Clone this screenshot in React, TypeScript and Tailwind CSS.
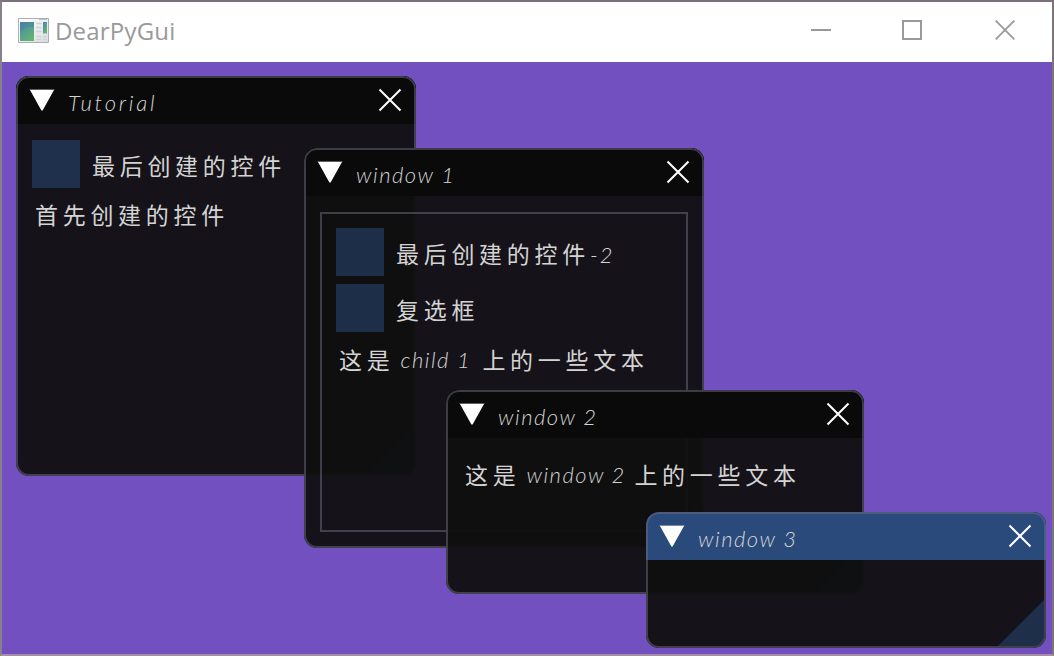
import type { ReactNode } from "react";

function Collapse() {
  return (
    <svg className="block h-6 w-[26px] shrink-0" viewBox="0 0 26 24" aria-hidden="true">
      <path d="M1 2H25L13.6 22.5H12.4Z" fill="#fff" />
      <path d="M0.5 1H25.5V2H0.5Z" fill="#fff" fillOpacity=".35" />
    </svg>
  );
}

function Close() {
  return (
    <svg className="block h-6 w-6 shrink-0" viewBox="0 0 24 24" aria-hidden="true">
      <path d="M1.5 1.5L22.5 22.5M22.5 1.5L1.5 22.5" stroke="#fff" strokeWidth="2" />
    </svg>
  );
}

/* Latin run in the slanted handwriting style */
function L({ children, className = "" }: { children: ReactNode; className?: string }) {
  return (
    <span className={`inline-block whitespace-pre font-['Lato','Liberation_Sans',sans-serif] text-[22px] font-light italic ${className}`}>
      {children}
    </span>
  );
}

/* Chinese run */
function C({ children }: { children: ReactNode }) {
  return (
    <span className="relative -top-px inline-block whitespace-pre font-['Noto_Sans_CJK_SC',sans-serif] text-[23px] leading-6 font-normal tracking-[4.7px]">
      {children}
    </span>
  );
}

function Win({
  title,
  titleClass,
  place,
  active = false,
  children,
}: {
  title: string;
  titleClass: string;
  place: string;
  active?: boolean;
  children?: ReactNode;
}) {
  return (
    <section className={`absolute flex flex-col overflow-hidden rounded-[13px] bg-[rgba(15,15,15,0.94)] text-[#d4d4d4] ${place}`}>
      <header className={`flex h-12 shrink-0 items-start pr-[14px] pl-[13px] pt-3 ${active ? "bg-[#294a7a]" : "bg-[#0a0a0a]"}`}>
        <Collapse />
        <h2 className="ml-[13px] flex-1 leading-[30px]">
          <L className={`leading-[30px] ${titleClass}`}>{title}</L>
        </h2>
        <Close />
      </header>
      <div className="flex flex-1 flex-col p-4">{children}</div>
      <svg className="absolute right-[2px] bottom-[2px] h-[46px] w-[46px]" viewBox="0 0 46 46" aria-hidden="true">
        <path d="M0 46L46 0V36A10 10 0 0 1 36 46Z" fill="rgba(66,150,250,0.22)" />
      </svg>
      <div className="pointer-events-none absolute inset-0 rounded-[13px] border-2 border-[rgba(110,110,128,0.5)]" />
    </section>
  );
}

function Check({ children }: { children: ReactNode }) {
  return (
    <div className="flex h-12 items-center gap-3">
      <span className="h-12 w-12 shrink-0 bg-[rgba(41,74,122,0.54)]" />
      <span className="flex items-center whitespace-nowrap pt-1">{children}</span>
    </div>
  );
}

export default function App() {
  return (
    <div className="flex h-[656px] w-[1054px] flex-col overflow-hidden border-2 border-t-[#7b6f7e] border-r-[#7b7479] border-b-[#a78fa6] border-l-[#88818a] bg-[#7350bf]">
      <div className="flex h-[60px] shrink-0 items-center bg-white pl-4">
        <svg className="-mt-[2px] h-[26px] w-8" viewBox="0 0 32 26" aria-hidden="true">
          <defs>
            <linearGradient id="pane" x1="0" y1="0" x2=".6" y2="1">
              <stop offset="0" stopColor="#4a84ae" />
              <stop offset="1" stopColor="#62b474" />
            </linearGradient>
            <linearGradient id="frame" x1="0" y1="0" x2="1" y2="1">
              <stop offset="0" stopColor="#fff" />
              <stop offset="1" stopColor="#dcdde0" />
            </linearGradient>
          </defs>
          <path d="M.5 .5H30.5V24.5H.5Z" fill="url(#frame)" stroke="#a9aeb5" />
          <path d="M21 1.5H29" stroke="#b9c0ca" />
          <path d="M2 4H16V23H2Z" fill="url(#pane)" />
          <path d="M2 14Q8 8 16 9V4H2Z" fill="#3f739f" fillOpacity=".3" />
          <path d="M18 5.5H23.5M18 9.5H23.5M18 13.5H23.5M18 18.5H23.5M18 21.5H23.5M25 18.5H29M25 21.5H29" stroke="#d0d2d6" strokeWidth="1.5" />
          <path d="M25 4H29V15.5H25Z" fill="url(#pane)" />
        </svg>
        <h1 className="-mt-[2px] ml-[5px] flex-1 font-['Open_Sans','Noto_Sans',sans-serif] text-[24px] leading-8 tracking-[0.2px] text-[#999]">DearPyGui</h1>
        <div className="flex items-center pr-[37px] pb-1">
          <svg className="h-[22px] w-5" viewBox="0 0 20 22" aria-hidden="true">
            <path d="M0 11H20" stroke="#999" strokeWidth="2" />
          </svg>
          <svg className="mr-[73px] ml-[71px] h-5 w-5" viewBox="0 0 20 20" aria-hidden="true">
            <path d="M1 1H19V19H1Z" fill="none" stroke="#999" strokeWidth="2" />
          </svg>
          <svg className="h-5 w-5" viewBox="0 0 20 20" aria-hidden="true">
            <path d="M.7 .7L19.3 19.3M19.3 .7L.7 19.3" stroke="#999" strokeWidth="1.8" />
          </svg>
        </div>
      </div>

      <main className="relative flex-1">
        <Win title="Tutorial" titleClass="tracking-[2.8px]" place="left-[14px] top-[14px] h-[400px] w-[400px]">
          <Check><C>最后创建的控件</C></Check>
          <div className="flex pt-[15px] pl-[3px]"><C>首先创建的控件</C></div>
        </Win>

        <Win title="window 1" titleClass="tracking-[1.5px]" place="left-[302px] top-[86px] h-[400px] w-[400px]">
          <div className="flex flex-1 flex-col gap-2 border-2 border-[rgba(110,110,128,0.5)] p-[14px]">
            <Check><C>最后创建的控件</C><L className="tracking-[2px]">-2</L></Check>
            <Check><C>复选框</C></Check>
            <div className="flex items-center whitespace-nowrap pt-[3px] pl-[3px]">
              <C>这是</C>
              <L className="ml-[6px] w-[82px] tracking-[1.5px]">child 1</L>
              <C>上的一些文本</C>
            </div>
          </div>
        </Win>

        <Win title="window 2" titleClass="tracking-[1.5px]" place="left-[444px] top-[328px] h-[204px] w-[418px]">
          <div className="flex items-center whitespace-nowrap pt-1 pl-[3px]">
            <C>这是</C>
            <L className="ml-[6px] w-[108px] tracking-[1.5px]">window 2</L>
            <C>上的一些文本</C>
          </div>
        </Win>

        <Win title="window 3" titleClass="tracking-[1.5px]" place="left-[644px] top-[450px] h-[136px] w-[400px]" active />
      </main>
      <div className="-mb-px h-px shrink-0 bg-[#c5afc5]" />
    </div>
  );
}
